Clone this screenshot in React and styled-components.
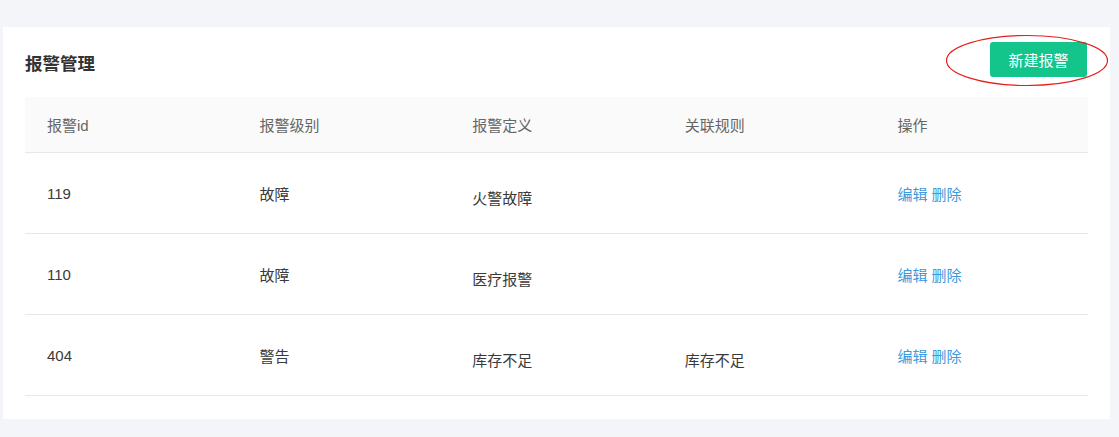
import React from 'react'
import styled, { createGlobalStyle } from 'styled-components'

const GlobalStyle = createGlobalStyle`
  html, body {
    margin: 0;
    padding: 0;
    background: #f4f5f9;
    font-family: "Liberation Sans", "Noto Sans CJK SC", sans-serif;
  }
`

const Page = styled.div`
  width: 1119px;
  height: 437px;
  padding: 27px 9px 0 3px;
  box-sizing: border-box;
`

const Card = styled.div`
  background: #fff;
  padding: 15px 22px 23px 22px;
`

const Header = styled.div`
  display: flex;
  align-items: center;
  justify-content: space-between;
  height: 35px;
  margin-bottom: 20px;
`

const Title = styled.h2`
  margin: 0;
  font-size: 17.5px;
  font-weight: bold;
  color: #333;
  padding-top: 5px;
`

const ButtonWrap = styled.div`
  position: relative;
  margin-right: 1px;
`

const Button = styled.button`
  height: 35px;
  width: 97px;
  border: none;
  border-radius: 3px;
  background: #13c48b;
  color: #fff;
  font-size: 15px;
  font-family: inherit;
  cursor: pointer;
`

const Circle = styled.svg`
  position: absolute;
  left: -45px;
  top: -8px;
  width: 164px;
  height: 53px;
  pointer-events: none;
  overflow: visible;
`

const Row = styled.div`
  display: grid;
  grid-template-columns: repeat(5, 1fr);
  align-items: center;
  height: ${p => (p.head ? '55px' : '80px')};
  background: ${p => (p.head ? '#fafafa' : '#fff')};
  border-bottom: 1px solid #e8e8e8;
  color: ${p => (p.head ? '#666' : '#3a3a3a')};
  font-size: 15px;
`

const Cell = styled.div`
  padding-left: 22px;
  padding-top: ${p => (p.low ? '8px' : '0')};
`

const Link = styled.a`
  color: #3b99dc;
  cursor: pointer;
  margin-right: 4px;
`

const rows = [
  { id: '119', level: '故障', def: '火警故障', rule: '' },
  { id: '110', level: '故障', def: '医疗报警', rule: '' },
  { id: '404', level: '警告', def: '库存不足', rule: '库存不足' },
]

export default function App() {
  return (
    <>
      <GlobalStyle />
      <Page>
        <Card>
          <Header>
            <Title>报警管理</Title>
            <ButtonWrap>
              <Button>新建报警</Button>
              <Circle viewBox="0 0 164 53">
                <ellipse cx="82" cy="26.5" rx="80.5" ry="25" fill="none" stroke="#e3201b" strokeWidth="1.2" />
              </Circle>
            </ButtonWrap>
          </Header>
          <Row head>
            <Cell>报警id</Cell>
            <Cell>报警级别</Cell>
            <Cell>报警定义</Cell>
            <Cell>关联规则</Cell>
            <Cell>操作</Cell>
          </Row>
          {rows.map(r => (
            <Row key={r.id}>
              <Cell>{r.id}</Cell>
              <Cell>{r.level}</Cell>
              <Cell low>{r.def}</Cell>
              <Cell low>{r.rule}</Cell>
              <Cell>
                <Link>编辑</Link>
                <Link>删除</Link>
              </Cell>
            </Row>
          ))}
        </Card>
      </Page>
    </>
  )
}
